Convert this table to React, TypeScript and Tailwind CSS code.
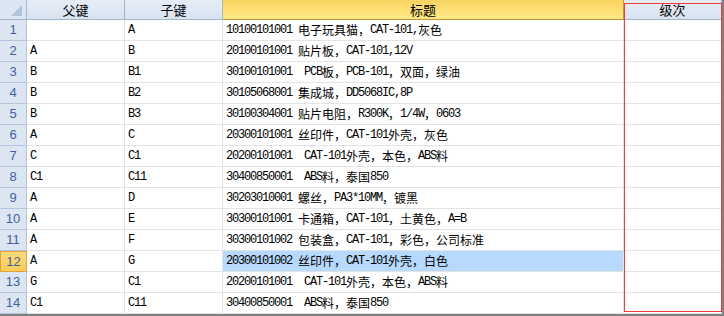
import React from "react";

type Row = { no: number; parent: string; child: string; title: string };

const rows: Row[] = [
  { no: 1, parent: "", child: "A", title: "10100101001 电子玩具猫，CAT-101,灰色" },
  { no: 2, parent: "A", child: "B", title: "20100101001 贴片板，CAT-101,12V" },
  { no: 3, parent: "B", child: "B1", title: "30100101001  PCB板，PCB-101，双面，绿油" },
  { no: 4, parent: "B", child: "B2", title: "30105068001 集成城，DD5068IC,8P" },
  { no: 5, parent: "B", child: "B3", title: "30100304001 贴片电阻，R300K，1/4W，0603" },
  { no: 6, parent: "A", child: "C", title: "20300101001 丝印件，CAT-101外壳，灰色" },
  { no: 7, parent: "C", child: "C1", title: "20200101001  CAT-101外壳，本色，ABS料" },
  { no: 8, parent: "C1", child: "C11", title: "30400850001  ABS料，泰国850" },
  { no: 9, parent: "A", child: "D", title: "30203010001 螺丝，PA3*10MM，镀黑" },
  { no: 10, parent: "A", child: "E", title: "30300101001 卡通箱，CAT-101，土黄色，A=B" },
  { no: 11, parent: "A", child: "F", title: "30300101002 包装盒，CAT-101，彩色，公司标准" },
  { no: 12, parent: "A", child: "G", title: "20300101002 丝印件，CAT-101外壳，白色" },
  { no: 13, parent: "G", child: "C1", title: "20200101001  CAT-101外壳，本色，ABS料" },
  { no: 14, parent: "C1", child: "C11", title: "30400850001  ABS料，泰国850" },
];

// half-width latin in a narrow mono, CJK in Noto
function CellText({ s }: { s: string }) {
  const parts = s.match(/[\x00-\x7f]+|[^\x00-\x7f]+/g) ?? [];
  return (
    <>
      {parts.map((p, i) =>
        /^[\x00-\x7f]/.test(p) ? (
          <span key={i} className="font-['Liberation_Mono',monospace] tracking-[-1.2px]">
            {p}
          </span>
        ) : (
          <span key={i} className="font-['Noto_Sans_CJK_SC',sans-serif]">
            {p}
          </span>
        )
      )}
    </>
  );
}

const colHead =
  "flex items-center justify-center h-full border-r border-b border-[#9eb6ce] bg-linear-to-b from-[#e6edf7] to-[#d8e3f0] text-[13px] text-black font-['Noto_Sans_CJK_SC',sans-serif]";

export default function App() {
  return (
    <div className="relative w-[724px] h-[316px] bg-white overflow-hidden border-r-2 border-b-2 border-[#808080]">
      {/* header */}
      <div className="flex h-[20px]">
        <div className="w-[27px] h-full border-r border-b border-[#9eb6ce] bg-[#dce6f3]">
          <svg width="26" height="19" viewBox="0 0 26 19">
            <polygon points="22,5 22,16 11,16" fill="#b3c3d7" />
          </svg>
        </div>
        <div className={`w-[98px] ${colHead}`}>父键</div>
        <div className={`w-[98px] ${colHead}`}>子键</div>
        <div className="w-[401px] h-full flex items-center justify-center border-r border-b border-[#c7953a] bg-linear-to-b from-[#f9d35f] to-[#ffe987] text-[13px] text-black font-['Noto_Sans_CJK_SC',sans-serif]">
          标题
        </div>
        <div className={`w-[98px] ${colHead}`}>级次</div>
      </div>

      {/* rows */}
      {rows.map((r) => {
        const sel = r.no === 12;
        return (
          <div key={r.no} className="flex h-[21px] text-[12px] text-black">
            <div
              className={
                sel
                  ? "w-[27px] h-full flex items-center justify-center bg-linear-to-b from-[#fbdc7c] to-[#f7cc55] shadow-[inset_0_0_0_1px_#e9a03a] text-[#3c6299] font-['Liberation_Sans',sans-serif] text-[13px]"
                  : "w-[27px] h-full flex items-center justify-center border-r border-b border-[#b3c5db] bg-[#dce6f3] text-[#3c6299] font-['Liberation_Sans',sans-serif] text-[13px]"
              }
            >
              {r.no}
            </div>
            <div className="w-[98px] h-full flex items-center pl-[3px] border-r border-b border-[#e2e3e4] whitespace-pre">
              <CellText s={r.parent} />
            </div>
            <div className="w-[98px] h-full flex items-center pl-[3px] border-r border-b border-[#e2e3e4] whitespace-pre">
              <CellText s={r.child} />
            </div>
            <div
              className={`w-[401px] h-full flex items-center pl-[3px] border-r border-b border-[#e2e3e4] whitespace-pre ${
                sel ? "bg-[#b6d9fd]" : ""
              }`}
            >
              <CellText s={r.title} />
            </div>
            <div className="w-[98px] h-full border-r border-b border-[#e2e3e4]" />
          </div>
        );
      })}

      {/* red marker around the 级次 column */}
      <div className="absolute left-[624px] top-[3px] w-[98px] h-[309px] border border-[#f23c3c] pointer-events-none" />
    </div>
  );
}
